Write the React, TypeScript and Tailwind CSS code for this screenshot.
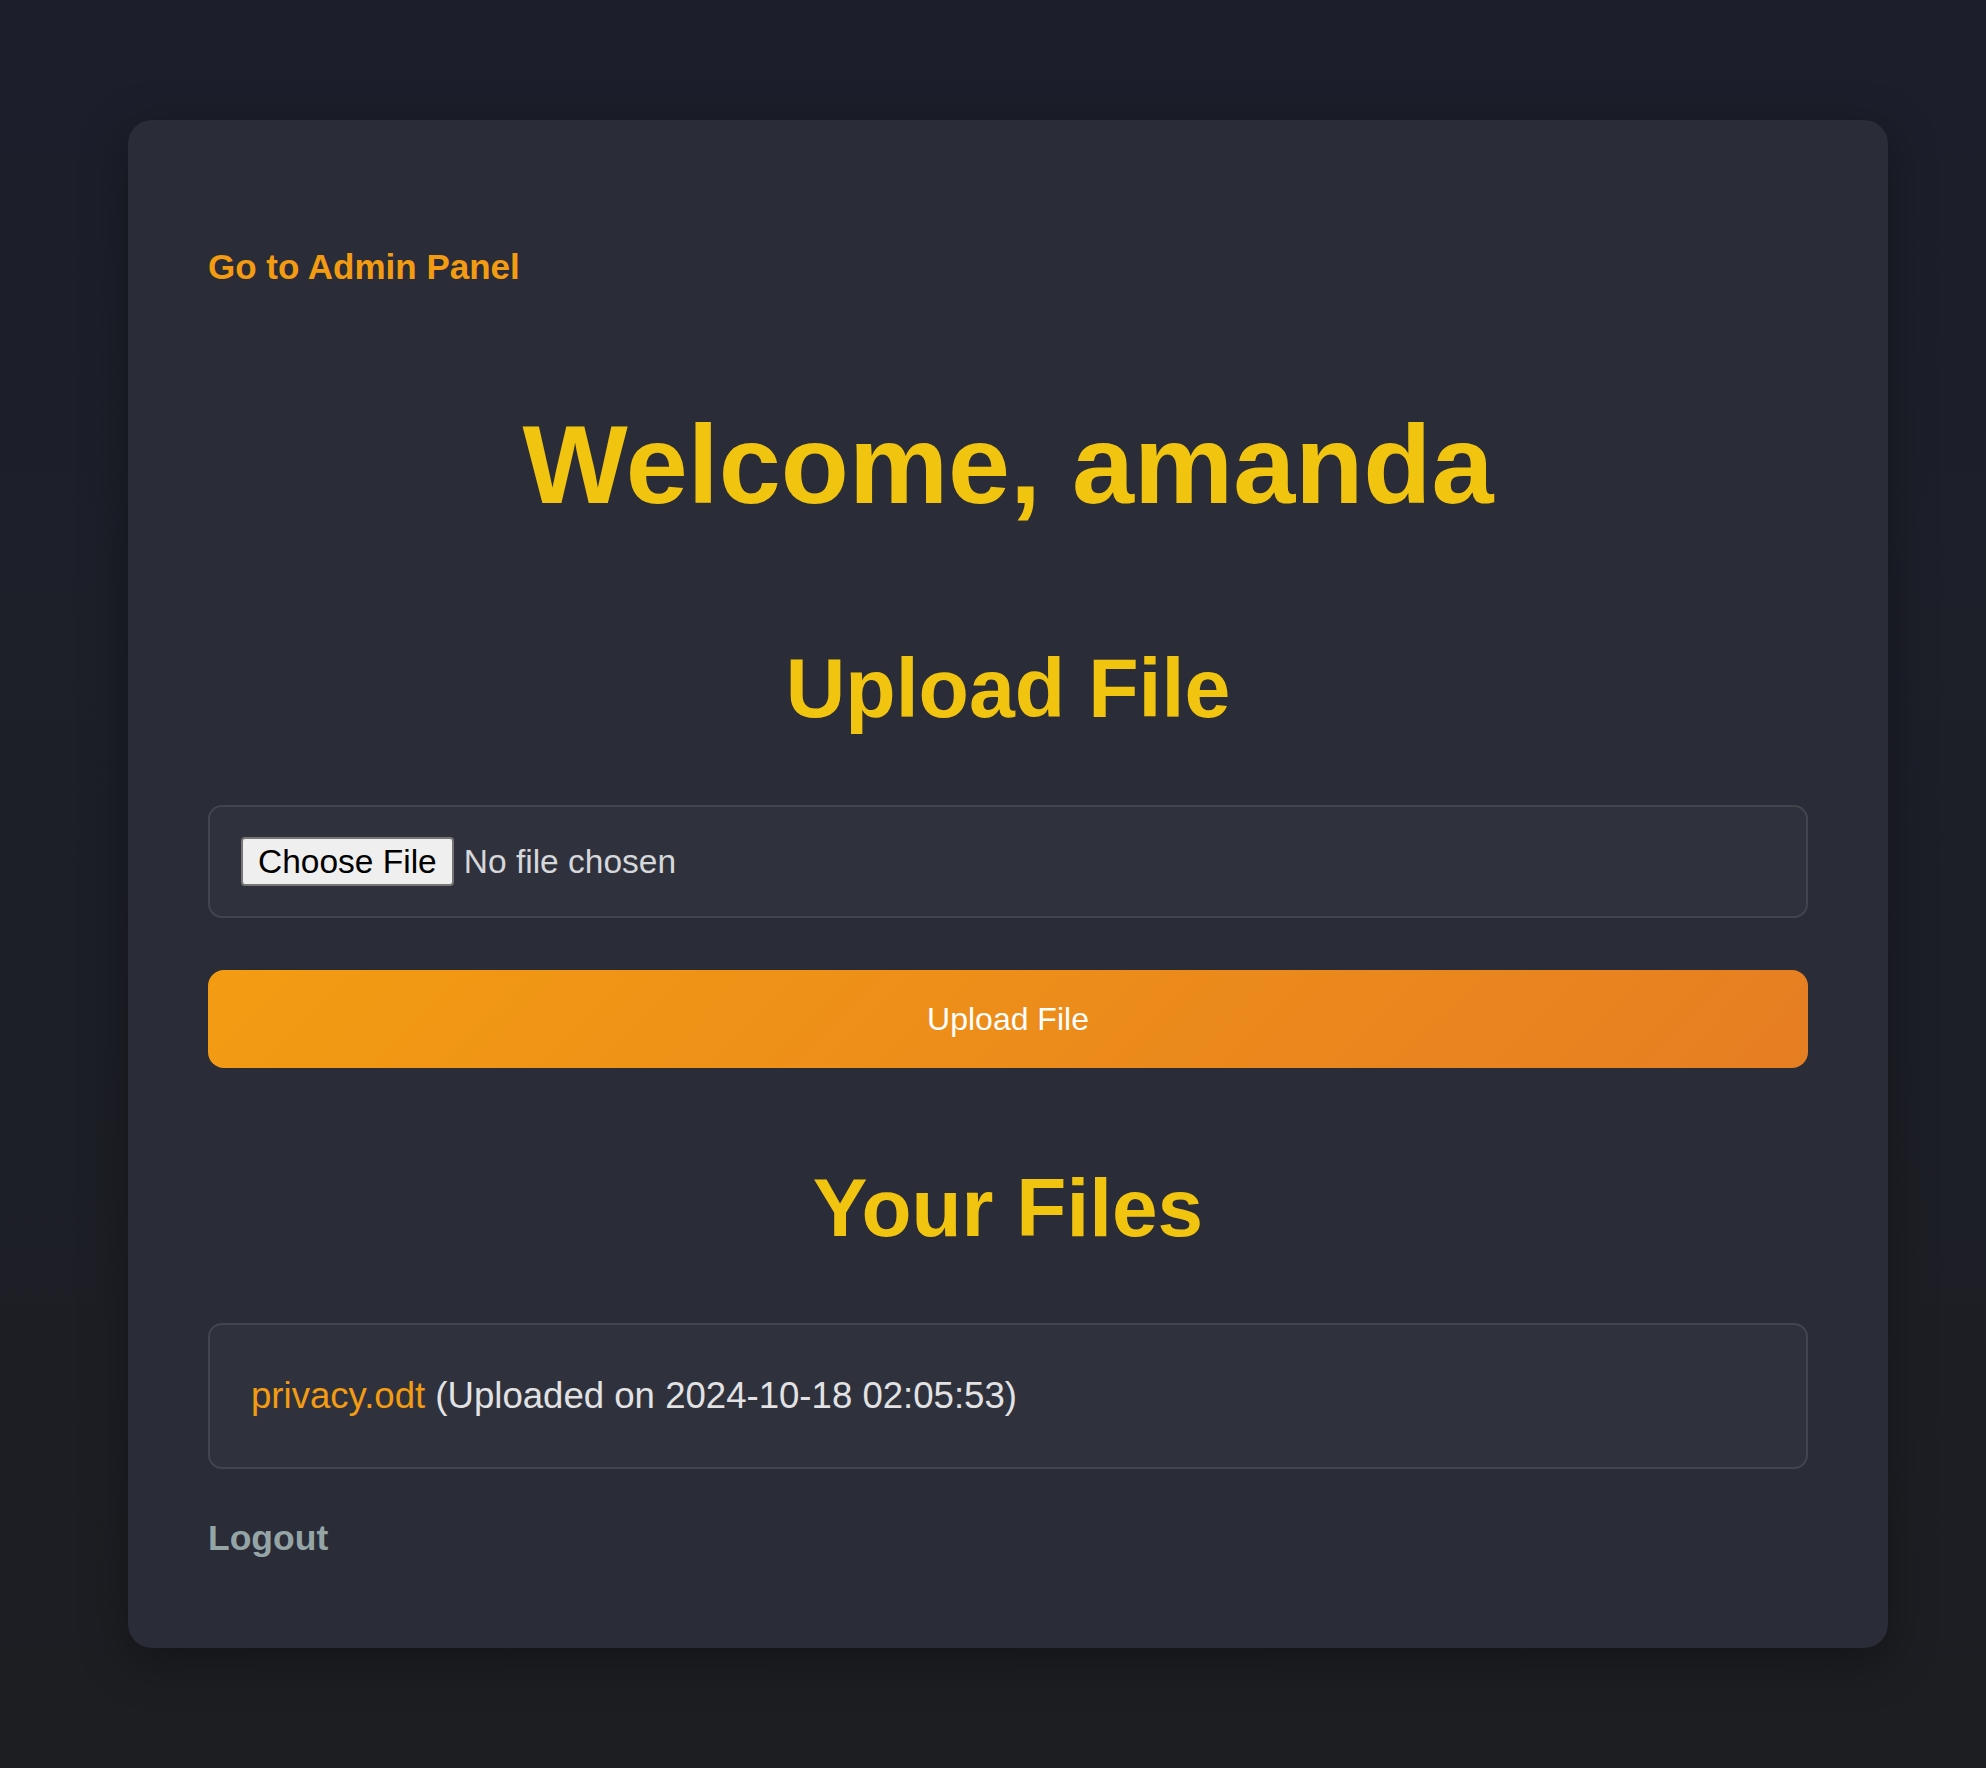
import React from 'react'

export default function App() {
  const files = [{ name: 'privacy.odt', uploaded: '2024-10-18 02:05:53' }]

  return (
    <div
      className="min-h-screen w-full bg-gradient-to-b from-[#1c1f2b] via-[#1d1f28] to-[#1d1e22] pt-[120px] pb-[120px] pl-[128px]"
      style={{ fontFamily: '"Liberation Sans", Arial, Helvetica, sans-serif' }}
    >
      <div className="w-[1760px] rounded-[24px] bg-[#2a2c38] px-[80px] pt-[80px] pb-[89px] shadow-[0_12px_48px_rgba(0,0,0,0.35)]">
        {/* Admin link */}
        <div className="mt-[47px]">
          <a href="#" className="text-[35px] leading-[40px] font-bold text-[#f39c12]">
            Go to Admin Panel
          </a>
        </div>

        <h1 className="mt-[111px] text-center text-[111.5px] leading-[133px] font-bold text-[#f1c40f]">
          Welcome, amanda
        </h1>

        <h2 className="mt-[108px] text-center text-[82.5px] leading-[99px] font-bold text-[#f1c40f]">
          Upload File
        </h2>

        <form className="mt-[67px] flex flex-col gap-[52px]">
          <label className="flex items-center rounded-[14px] border-2 border-[#43454c] bg-[#2f323d] px-[31px] py-[30px] cursor-pointer">
            <input type="file" className="hidden" />
            <span className="rounded-[4px] border-2 border-[#767676] bg-[#efefef] px-[15px] py-[3px] text-[33.5px] leading-[39px] text-black">
              Choose File
            </span>
            <span className="ml-[10px] text-[33.5px] leading-[39px] text-[#d6d7da]">No file chosen</span>
          </label>

          <button
            type="button"
            className="h-[98px] w-full rounded-[16px] bg-[linear-gradient(135deg,#f39c12,#e67e22)] text-[32px] text-white"
          >
            Upload File
          </button>
        </form>

        <h2 className="mt-[90px] text-center text-[82px] leading-[99px] font-bold text-[#f1c40f]">
          Your Files
        </h2>

        <ul className="mt-[66px] flex flex-col">
          {files.map((f) => (
            <li
              key={f.name}
              className="rounded-[14px] border-2 border-[#43454c] bg-[#2f323d] px-[41px] py-[50px] text-[36.6px] leading-[42px] text-[#e2e2e4]"
            >
              <a href="#" className="text-[#f39c12]">
                {f.name}
              </a>{' '}
              (Uploaded on {f.uploaded})
            </li>
          ))}
        </ul>

        <div className="mt-[48px]">
          <a href="#" className="text-[35.5px] leading-[42px] font-bold text-[#95a5a6]">
            Logout
          </a>
        </div>
      </div>
    </div>
  )
}
